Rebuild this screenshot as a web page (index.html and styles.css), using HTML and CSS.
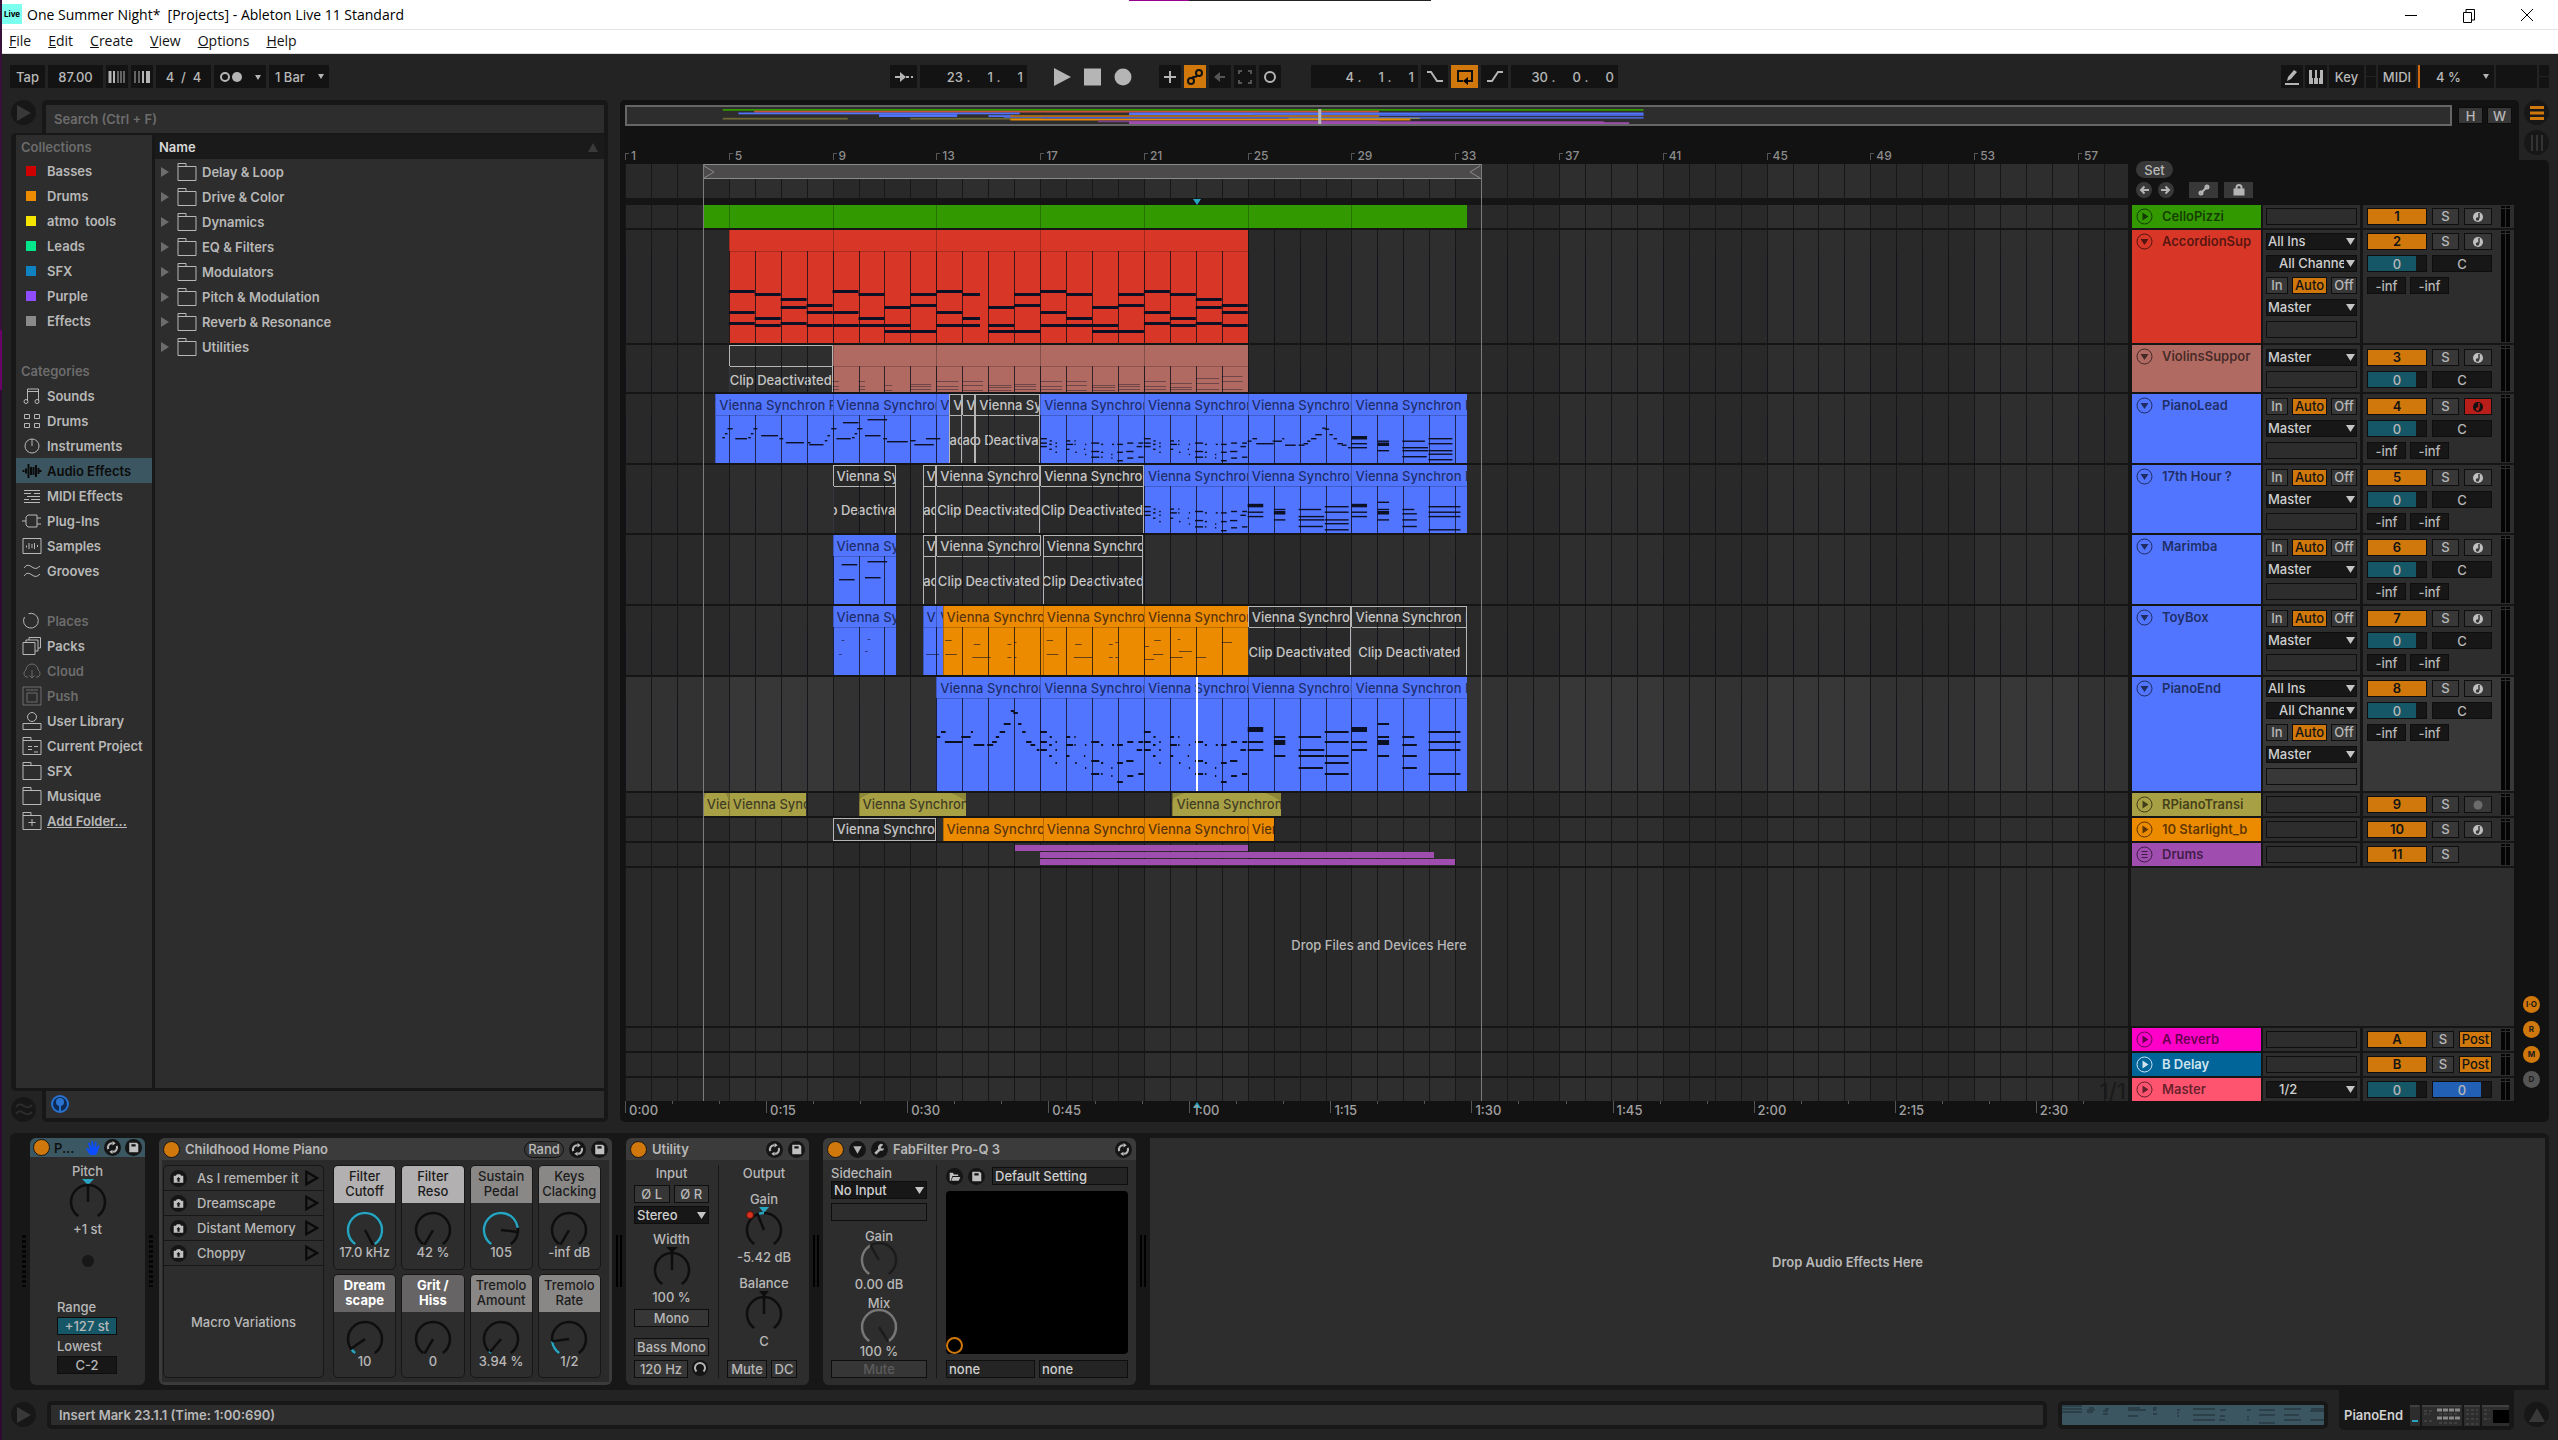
FILE: index.html
```html
<!DOCTYPE html>
<html lang="en">
<head>
<meta charset="utf-8">
<title>One Summer Night* [Projects] - Ableton Live 11 Standard</title>
<link rel="stylesheet" href="styles.css">
</head>
<body>
<svg class="sprite" aria-hidden="true">
  <symbol id="i-folder" viewBox="0 0 20 20"><path d="M1 18.500V1.500h8v3h10v14zM1 4.500h8"/></symbol>
  <symbol id="i-sounds" viewBox="0 0 20 20"><path d="M5.500 15V3h11v12M5.500 5.500h11"/><circle cx="4" cy="15.500" r="2"/><circle cx="15" cy="15.500" r="2"/></symbol>
  <symbol id="i-drums" viewBox="0 0 20 20"><path d="M2.500 3.500h5v4h-5zM12.500 3.500h5v4h-5zM2.500 12.500h5v4h-5zM12.500 12.500h5v4h-5z"/></symbol>
  <symbol id="i-inst" viewBox="0 0 20 20"><circle cx="10" cy="10" r="7"/><path d="M10 3v7"/></symbol>
  <symbol id="i-wave" viewBox="0 0 20 20"><path d="M1.500 9v2M4 7.500v5M6.500 3v14M9 6v8M11.500 6v8M14 4v12M16.500 7v6M18.500 9v2"/></symbol>
  <symbol id="i-midi" viewBox="0 0 20 20"><path d="M2 4.500h16M2 7.500h7M12 7.500h6M5 10.500h13M2 13.500h5M9 13.500h9M2 16.500h16"/></symbol>
  <symbol id="i-plug" viewBox="0 0 20 20"><path d="M0 10h4M6 4h9v12H6l-2-2V6zM15 7h4M15 13h4"/></symbol>
  <symbol id="i-sample" viewBox="0 0 20 20"><path d="M1 2.500h18v15H1zM4.500 9.500v2M7 7v6M10 8v4M12.500 7v6M15.500 9v2"/></symbol>
  <symbol id="i-groove" viewBox="0 0 20 20"><path d="M2 7c3-4 5-3 8-1s5 2 8-1M2 15c3-4 5-3 8-1s5 2 8-1"/></symbol>
  <symbol id="i-places" viewBox="0 0 20 20"><path d="M5 2.500A7.500 7.500 0 1 0 14.500 5.500A7 7 0 0 0 6 2.500M1.500 4.500A9 9 0 0 0 2 13" stroke="none"/><path d="M6.500 2.700A7.400 7.400 0 1 1 2.500 6"/></symbol>
  <symbol id="i-packs" viewBox="0 0 20 20"><path d="M1 6.500h12v12H1zM4 6V4h12v11h-3M7 4V1.500h11.500V12H16"/></symbol>
  <symbol id="i-cloud" viewBox="0 0 20 20"><path d="M6 16H4a4 4 0 0 1 0-7 6 6 0 0 1 12 0 4 4 0 0 1 0 7h-2M10 9v8M7.500 14.500 10 17l2.500-2.500"/></symbol>
  <symbol id="i-push" viewBox="0 0 20 20"><path d="M1 1h18v18H1zM4 4h12M5 7h10v9H5z"/></symbol>
  <symbol id="i-user" viewBox="0 0 20 20"><circle cx="10" cy="6" r="4.500"/><path d="M1 18.500v-6h18v6z"/></symbol>
  <symbol id="i-project" viewBox="0 0 20 20"><path d="M1 18.500V1.500h8v3h10v14zM1 4.500h8M6 10.500h4M6 13.500h4M12 10.500h4M12 16h4"/></symbol>
  <symbol id="i-add" viewBox="0 0 20 20"><path d="M1 18.500V1.500h8v3h10v14zM1 4.500h8M10 8v7M6.500 11.500h7"/></symbol>
  <symbol id="i-sync" viewBox="0 0 16 16"><circle cx="8" cy="8" r="8" class="disc"/><path d="M4 9.500A4 4 0 0 1 8 4M12 6.500A4 4 0 0 1 8 12" class="ln"/><path d="M8 1.800 11 4 8 6zM8 10l-3 2 3 2.200z" class="fl"/></symbol>
  <symbol id="i-save" viewBox="0 0 16 16"><circle cx="8" cy="8" r="8" class="disc"/><path d="M4 3.500h7l1.500 1.500v7.500H4zM6 5v2h4V5z" class="fl" fill-rule="evenodd"/></symbol>
  <symbol id="i-cam" viewBox="0 0 16 16"><circle cx="8" cy="8" r="8" class="disc"/><path d="M3.500 5.500h2L6.500 4h3l1 1.500h2v6.500h-9zM8 6.500 10 8.700H9V11H7V8.700H6z" class="fl" fill-rule="evenodd"/></symbol>
  <symbol id="i-tri" viewBox="0 0 12 14"><path d="M1 1.500 10.500 7 1 12.500z" class="tri"/></symbol>
  <symbol id="arc" viewBox="-20 -20 40 40" overflow="visible"><path d="M-9.700 14A17 17 0 1 1 9.700 14"/></symbol>
</svg>

<div class="app">
  <header class="titlebar">
    <span class="logo">Live</span>
    <h1>One Summer Night*&nbsp; [Projects] - Ableton Live 11 Standard</h1>
    <span class="topline" aria-hidden="true"></span>
    <div class="winctl">
      <button aria-label="Minimize"><svg viewBox="0 0 14 18"><path d="M1 9.500h12"/></svg></button>
      <button aria-label="Restore"><svg viewBox="0 0 14 18"><path d="M1.500 6.500h8v10h-8zM4 6V3.500h8.500V14H10"/></svg></button>
      <button aria-label="Close"><svg viewBox="0 0 14 18"><path d="M1 3l12 12M13 3 1 15"/></svg></button>
    </div>
  </header>
  <nav class="menubar">
    <a href="#"><u>F</u>ile</a><a href="#"><u>E</u>dit</a><a href="#"><u>C</u>reate</a><a href="#"><u>V</u>iew</a><a href="#"><u>O</u>ptions</a><a href="#"><u>H</u>elp</a>
  </nav>

  <section class="transport">
    <div class="tgroup">
      <button class="t w35">Tap</button>
      <input class="t w54" aria-label="Tempo" value="87.00">
      <button class="t w22" aria-label="Nudge down"><svg width="18" height="14" class="bars"><path d="M2 1v12" stroke-width="3"/><path d="M6 1v12" stroke-width="2"/><path d="M10 1v12M13 1v12M16 1v12"/></svg></button>
      <button class="t w22" aria-label="Nudge up"><svg width="18" height="14" class="bars"><path d="M2 1v12M6 1v12"/><path d="M10 1v12" stroke-width="2"/><path d="M15 1v12" stroke-width="4"/></svg></button>
      <input class="t w54" aria-label="Time signature" value="4  /  4">
      <button class="t w52" aria-label="Metronome"><svg width="46" height="14"><circle cx="8" cy="7" r="4" class="ring"/><circle cx="20" cy="7" r="5" fill="#b5b5b5"/><path d="M38 5h6l-3 5z" fill="#b5b5b5"/></svg></button>
      <select class="t w59 mini" aria-label="Quantization"><option>1 Bar</option></select>
    </div>
    <div class="tgroup">
      <button class="t w27" aria-label="Follow"><svg width="20" height="12"><path d="M1 6h6M12 6h3M17 6h2" class="ring"/><path d="M6 1l6 5-6 5z" fill="#b5b5b5"/></svg></button>
      <input class="t w107 pos" aria-label="Arrangement position" value="23 .     1 .     1">
      <span class="sp s20"></span>
      <button class="tp" aria-label="Play"><svg width="18" height="20"><path d="M0 1l17 9-17 9z"/></svg></button>
      <button class="tp" aria-label="Stop"><svg width="18" height="20"><path d="M0 1.500h17v17H0z"/></svg></button>
      <button class="tp" aria-label="Record"><svg width="18" height="20"><circle cx="9" cy="10" r="8.500"/></svg></button>
      <span class="sp s20"></span>
      <button class="t w22" aria-label="Overdub"><svg width="14" height="14"><path d="M7 1v12M1 7h12" class="ring"/></svg></button>
      <button class="t w22 on" aria-label="Automation arm"><svg width="16" height="16"><circle cx="4" cy="12" r="3" class="dk"/><circle cx="12" cy="4" r="3" class="dk"/><path d="M5 9.500C6 6 8 10 10 6.500" class="dk"/></svg></button>
      <button class="t w22" aria-label="Re-enable automation"><svg width="14" height="12"><path d="M4 6h8" stroke="#555" stroke-width="2"/><path d="M7 1v10L1 6z" fill="#555"/></svg></button>
      <button class="t w22" aria-label="Capture"><svg width="14" height="14"><path d="M1 4V1h3M10 1h3v3M13 10v3h-3M4 13H1v-3" fill="none" stroke="#555" stroke-width="2"/></svg></button>
      <button class="t w22" aria-label="Session record"><svg width="14" height="14"><circle cx="7" cy="7" r="5" class="ring"/></svg></button>
      <span class="sp"></span>
      <input class="t w107 pos" aria-label="Loop start" value="4 .     1 .     1">
      <button class="t w27" aria-label="Punch in"><svg width="18" height="12"><path d="M1 1h4l6 9h6" class="ring"/></svg></button>
      <button class="t w27 on" aria-label="Loop"><svg width="18" height="16"><path d="M7 12H2V2h14v10h-5" class="dk"/><path d="M12 8v8l-5-4z"/></svg></button>
      <button class="t w27" aria-label="Punch out"><svg width="18" height="12"><path d="M1 10h5l6-9h5" class="ring"/></svg></button>
      <input class="t w107 pos" aria-label="Loop length" value="30 .     0 .     0">
    </div>
    <div class="tgroup end">
      <button class="t w22" aria-label="Draw mode"><svg width="16" height="16"><path d="M1 15h14" class="ring"/><path d="M3 12l1-4 6-7 3 2-6 7z" fill="#b5b5b5"/></svg></button>
      <button class="t w22" aria-label="Computer MIDI keyboard"><svg width="16" height="16"><path d="M1 1h14v14H1z" fill="#b5b5b5"/><path d="M5.500 1v14M10.500 1v14" stroke="#151515"/><path d="M5.500 1v8M10.500 1v8" stroke="#151515" stroke-width="3"/></svg></button>
      <button class="t w35">Key</button>
      <span class="t w10 split"></span>
      <button class="t w38">MIDI</button>
      <select class="t w75 mini cpu" aria-label="CPU load"><option>4 %</option></select>
      <span class="t w41"></span>
      <span class="t w10 split"></span>
    </div>
  </section>

  <main class="main">
    <aside class="browser">
      <div class="btop">
        <button class="disc-btn" aria-label="Preview"><svg width="14" height="16"><path d="M0 0l14 8-14 8z"/></svg></button>
        <div class="search-shell"><input type="search" placeholder="Search (Ctrl + F)" aria-label="Search"></div>
      </div>
      <div class="bbody">
        <ul class="side">
          <li class="head">Collections</li>
          <li><i class="sw" style="background:#cf0000"></i>Basses</li>
          <li><i class="sw" style="background:#ed8b00"></i>Drums</li>
          <li><i class="sw" style="background:#f5e500"></i>atmo&nbsp; tools</li>
          <li><i class="sw" style="background:#00e68a"></i>Leads</li>
          <li><i class="sw" style="background:#0f83c2"></i>SFX</li>
          <li><i class="sw" style="background:#8f4dff"></i>Purple</li>
          <li><i class="sw" style="background:#8a8a8a"></i>Effects</li>
          <li></li>
          <li class="head">Categories</li>
          <li><svg><use href="#i-sounds"/></svg>Sounds</li>
          <li><svg><use href="#i-drums"/></svg>Drums</li>
          <li><svg><use href="#i-inst"/></svg>Instruments</li>
          <li class="sel"><svg><use href="#i-wave"/></svg>Audio Effects</li>
          <li><svg><use href="#i-midi"/></svg>MIDI Effects</li>
          <li><svg><use href="#i-plug"/></svg>Plug-Ins</li>
          <li><svg><use href="#i-sample"/></svg>Samples</li>
          <li><svg><use href="#i-groove"/></svg>Grooves</li>
          <li></li>
          <li class="places"><svg><use href="#i-places"/></svg>Places</li>
          <li><svg><use href="#i-packs"/></svg>Packs</li>
          <li class="dim"><svg><use href="#i-cloud"/></svg>Cloud</li>
          <li class="dim"><svg><use href="#i-push"/></svg>Push</li>
          <li><svg><use href="#i-user"/></svg>User Library</li>
          <li><svg><use href="#i-project"/></svg>Current Project</li>
          <li><svg><use href="#i-folder"/></svg>SFX</li>
          <li><svg><use href="#i-folder"/></svg>Musique</li>
          <li><svg><use href="#i-add"/></svg><a href="#">Add Folder...</a></li>
        </ul>
        <div class="files">
          <div class="fhead">Name<span class="sort"></span></div>
          <ul>
            <li><svg><use href="#i-folder"/></svg>Delay &amp; Loop</li>
            <li><svg><use href="#i-folder"/></svg>Drive &amp; Color</li>
            <li><svg><use href="#i-folder"/></svg>Dynamics</li>
            <li><svg><use href="#i-folder"/></svg>EQ &amp; Filters</li>
            <li><svg><use href="#i-folder"/></svg>Modulators</li>
            <li><svg><use href="#i-folder"/></svg>Pitch &amp; Modulation</li>
            <li><svg><use href="#i-folder"/></svg>Reverb &amp; Resonance</li>
            <li><svg><use href="#i-folder"/></svg>Utilities</li>
          </ul>
        </div>
      </div>
      <div class="bfoot">
        <button class="disc-btn" aria-label="Groove pool"><svg width="18" height="16"><path d="M1 5c3-4 5-3 8-1s5 2 8-1M1 12c3-4 5-3 8-1s5 2 8-1" class="wv"/></svg></button>
        <div class="foot-shell"><div class="foot"><svg width="20" height="20"><circle cx="10" cy="10" r="8" fill="#0b2a55" stroke="#2a72d0" stroke-width="2"/><circle cx="10" cy="8" r="4" fill="#2a72d0"/><path d="M10 8v9" stroke="#2a72d0" stroke-width="2"/></svg></div></div>
      </div>
    </aside>

    <section class="arr">
      <div class="strip-row">
        <div class="strip">
          <div class="ovrow">
            <div class="overview"><svg id="overview" viewBox="0 0 582 17" preserveAspectRatio="none"></svg></div>
            <button class="hw">H</button><button class="hw">W</button>
          </div>
          <div class="ruler" id="ruler"></div>
        </div>
        <div class="views">
          <button class="disc-btn" aria-label="Arrangement view"><svg width="14" height="16"><path d="M0 2.500h14M0 8h14M0 13.500h14" stroke="#d0780c" stroke-width="3"/></svg></button>
          <button class="disc-btn" aria-label="Session view"><svg width="14" height="16"><path d="M2 0v16M7 0v16M12 0v16" stroke="#333" stroke-width="2"/></svg></button>
        </div>
      </div>
      <div class="arr-body">
        <div class="rows">
          <div class="looprow">
            <div class="lane grid-all"><div class="loop" id="loop"><svg width="14" height="14"><path d="M1 1l10 6-10 6"/></svg><svg width="14" height="14"><path d="M13 1L3 7l10 6"/></svg></div></div>
            <div class="locators">
              <button class="pill">Set</button>
              <div class="locrow">
                <button class="rnd" aria-label="Previous locator"><svg width="10" height="10"><path d="M2 5h8M5.500 1.500 2 5l3.500 3.500"/></svg></button>
                <button class="rnd" aria-label="Next locator"><svg width="10" height="10"><path d="M0 5h8M4.500 1.500 8 5 4.500 8.500"/></svg></button>
                <button class="sq" aria-label="Automation mode"><svg width="12" height="12"><path d="M3 9l6-6" /><circle cx="3" cy="9" r="1.500"/><circle cx="9" cy="3" r="1.500"/></svg></button>
                <button class="sq" aria-label="Lock envelopes"><svg width="12" height="12"><path d="M1.500 5.500h9v5h-9z" fill="#b5b5b5"/><path d="M3.500 5V3.500a2.500 2.500 0 0 1 5 0V5"/></svg></button>
              </div>
            </div>
          </div>
          <div class="band"></div>
          <div id="tracks" class="tracks"></div>
          <div class="marks" id="marks" aria-hidden="true"></div>
        </div>
        <div class="timeruler" id="timeruler"></div>
        <div class="sections">
          <button>I·O</button><button>R</button><button>M</button><button class="off">D</button>
        </div>
      </div>
    </section>
  </main>

  <section class="devices">
    <span class="dots"></span>
    <article class="dev pitch">
      <header class="teal"><button class="led" aria-label="Pitch on"></button><h2>P...</h2>
        <svg class="hand" width="14" height="16"><path d="M4 15 0 9l1-1 3 2-2-7 1.500-.5L5.500 8 5.200 1h1.600L8 8l1.200-6.500 1.500.3L10 8.500 12.300 5l1.400.8L11.500 12l-1.500 3z" fill="#0b4dff"/></svg>
        <svg class="ic"><use href="#i-sync"/></svg><svg class="ic"><use href="#i-save"/></svg></header>
      <div class="dbody col">
        <span class="lb">Pitch</span>
        <svg class="knob tall" viewBox="-20 -23 40 42"><path d="M-6-23H6L0-17z" fill="#27a4bf"/><use href="#arc" x="-20" y="-20" width="40" height="40"/><path d="M0 0V-17"/></svg>
        <span class="lb">+1 st</span>
        <span class="hole"></span>
        <label class="lb left" for="rng">Range</label><input id="rng" class="box tealbox" value="+127 st">
        <label class="lb left" for="low">Lowest</label><input id="low" class="box" value="C-2">
      </div>
    </article>
    <span class="dots"></span>
    <article class="dev rack">
      <header><button class="led" aria-label="Rack on"></button><h2>Childhood Home Piano</h2><button class="rand">Rand</button><svg class="ic"><use href="#i-sync"/></svg><svg class="ic"><use href="#i-save"/></svg></header>
      <div class="rbody">
        <div class="vars">
          <ul>
            <li><svg class="ic"><use href="#i-cam"/></svg><span>As I remember it</span><svg class="tr"><use href="#i-tri"/></svg></li>
            <li><svg class="ic"><use href="#i-cam"/></svg><span>Dreamscape</span><svg class="tr"><use href="#i-tri"/></svg></li>
            <li><svg class="ic"><use href="#i-cam"/></svg><span>Distant Memory</span><svg class="tr"><use href="#i-tri"/></svg></li>
            <li><svg class="ic"><use href="#i-cam"/></svg><span>Choppy</span><svg class="tr"><use href="#i-tri"/></svg></li>
          </ul>
          <p>Macro Variations</p>
        </div>
        <div class="macros" id="macros"></div>
      </div>
    </article>
    <span class="lvl"></span>
    <article class="dev util">
      <header><button class="led" aria-label="Utility on"></button><h2>Utility</h2><svg class="ic"><use href="#i-sync"/></svg><svg class="ic"><use href="#i-save"/></svg></header>
      <div class="dbody two">
        <div class="ucol">
          <span class="lb">Input</span>
          <div class="r g4"><button class="b">Ø L</button><button class="b">Ø R</button></div>
          <select class="b dd g3" aria-label="Channel mode"><option>Stereo</option></select>
          <span class="lb g7">Width</span>
          <svg class="knob tall" viewBox="-20 -23 40 42"><path d="M-6-23H6L0-17z" class="bk"/><use href="#arc" x="-20" y="-20" width="40" height="40"/><path d="M0 0V-17"/></svg>
          <span class="lb">100 %</span>
          <button class="b g4">Mono</button>
          <button class="b g11">Bass Mono</button>
          <div class="r g4"><input class="b hz" aria-label="Bass mono frequency" value="120 Hz"><svg class="ic"><circle cx="8" cy="8" r="8" class="disc"/><path d="M4.500 11.500A5 5 0 1 1 11.500 11.500" fill="none" stroke="#b5b5b5" stroke-width="2"/></svg></div>
        </div>
        <div class="ucol right">
          <span class="lb">Output</span>
          <span class="lb g10">Gain</span>
          <svg class="knob tall" viewBox="-20 -23 40 42"><path d="M-5-23H5L0-17z" fill="#27a4bf"/><use href="#arc" x="-20" y="-20" width="40" height="40"/><path d="M-5-16.300A17 17 0 0 1 0-17" stroke="#27a4bf"/><path d="M0 0V-17" transform="rotate(-22)"/><circle cx="-14" cy="-15" r="3.500" fill="#d8321e" stroke="#5a1008" stroke-width="1"/></svg>
          <span class="lb">-5.42 dB</span>
          <span class="lb g10">Balance</span>
          <svg class="knob tall" viewBox="-20 -23 40 42"><path d="M-5-23H5L0-17z" class="bk"/><use href="#arc" x="-20" y="-20" width="40" height="40"/><path d="M0 0V-17"/></svg>
          <span class="lb">C</span>
          <div class="r bottom"><button class="b mute">Mute</button><button class="b dc">DC</button></div>
        </div>
      </div>
    </article>
    <span class="lvl"></span>
    <article class="dev fab">
      <header><button class="led" aria-label="FabFilter on"></button>
        <svg class="ic" viewBox="0 0 16 16"><circle cx="8" cy="8" r="8" class="disc"/><path d="M4 5h8l-4 7z" fill="#b5b5b5"/></svg>
        <svg class="ic" viewBox="0 0 16 16"><circle cx="8" cy="8" r="8" class="disc"/><path d="M4 12l4.500-4.500" stroke="#b5b5b5" stroke-width="2.500"/><path d="M11.500 3.500A3 3 0 1 0 12.500 7L10 7 9 6z" fill="#b5b5b5"/></svg>
        <h2>FabFilter Pro-Q 3</h2><svg class="ic"><use href="#i-sync"/></svg></header>
      <div class="dbody two">
        <div class="fcol">
          <label class="lb left" for="sc">Sidechain</label>
          <select id="sc" class="b dd"><option>No Input</option></select>
          <span class="b hollow g4"></span>
          <span class="lb g7">Gain</span>
          <svg class="knob low" viewBox="-20 -18 40 34"><use href="#arc" x="-20" y="-20" width="40" height="40" stroke="#1c1c1c"/><use href="#arc" x="-20" y="-20" width="40" height="40" stroke="#777" stroke-dasharray="34 200"/><path d="M0 0V-17" stroke="#1c1c1c" transform="rotate(-30)"/></svg>
          <span class="lb">0.00 dB</span>
          <span class="lb g3">Mix</span>
          <svg class="knob low" viewBox="-20 -18 40 34"><use href="#arc" x="-20" y="-20" width="40" height="40" stroke="#777"/><path d="M0 0V-17" stroke="#1c1c1c" transform="rotate(148)"/></svg>
          <span class="lb">100 %</span>
          <button class="b faint bottom">Mute</button>
        </div>
        <div class="xycol">
          <div class="preset"><svg class="ic" viewBox="0 0 16 16"><circle cx="8" cy="8" r="8" class="disc"/><path d="M3.500 12V4.500h3l1 1.500h4v1.500H6L4.500 12zM6.500 8.500h7L12 12H5z" class="fl"/></svg><svg class="ic"><use href="#i-save"/></svg><input class="b txt" aria-label="Preset" value="Default Setting"></div>
          <div class="xy"><span></span></div>
          <div class="r nones"><input class="b txt" aria-label="X parameter" value="none"><input class="b txt" aria-label="Y parameter" value="none"></div>
        </div>
      </div>
    </article>
    <span class="lvl"></span>
    <div class="dropfx">Drop Audio Effects Here</div>
  </section>

  <footer class="status">
    <button class="disc-btn" aria-label="Help view"><svg width="14" height="16"><path d="M0 0l14 8-14 8z"/></svg></button>
    <p class="msg">Insert Mark 23.1.1 (Time: 1:00:690)</p>
    <div class="clipview"><svg viewBox="0 0 262 20" preserveAspectRatio="none"><path d="M0 1h20M0 4h20M0 7h20M27 3h5M25 5h8M25 7h6M43 4h4M41 6h5M41 9h5M66 3h12M66 5h18M66 11h10M91 3h4M91 5h3M91 9h4M115 5h3M115 8h2M115 11h2M131 4h22M131 10h22M131 15h22M158 5h6M158 11h5M157 15h6M185 5h4M185 12h2M185 15h2M197 5h16M197 10h16M197 18h16M222 4h17M222 10h15M222 15h17M249 4h13M248 6h14M248 15h14"/></svg></div>
    <div class="devtab"><span>PianoEnd</span>
      <svg width="99" height="21"><path d="M0 0h10v21H0zM12 0h40v21H12zM54 0h16v21H54zM72 0h27v21H72z" fill="#2d2d2d"/><path d="M0 1h9M12 1h39M54 1h16M72 1h27" stroke="#555"/><path d="M27 5h24M27 13h24" stroke="#888" stroke-width="3" stroke-dasharray="5 1"/><path d="M14 6h8M14 9h6M14 16h10M56 5h12M56 9h12M56 14h12M56 19h12M74 5h6M74 9h5M74 14h6M29 9h20M29 18h20" stroke="#555" stroke-dasharray="3 2"/><path d="M2 16h6" stroke="#27a4bf" stroke-width="2"/><path d="M83 5h16v13H83z"/></svg>
    </div>
    <button class="disc-btn last" aria-label="Toggle detail view"><svg width="16" height="14"><path d="M8 0l8 14H0z"/></svg></button>
  </footer>
</div>
<script src="app.js"></script>
</body>
</html>
```

FILE: styles.css
```css
* { box-sizing: border-box; }
body {
  margin: 0;
  background: linear-gradient(#38103a 0 330px, #6a006a 330px 390px, #2e0a30 390px);
  color: #b8b8b8;
  font: 500 13px/16px Inter, "Liberation Sans", sans-serif;
}
button, input, select { font: inherit; color: inherit; border: 0; padding: 0; margin: 0; border-radius: 0; background: none; }
button { display: flex; align-items: center; justify-content: center; white-space: nowrap; }
input { min-width: 0; }
select { appearance: none; }
ul, h1, h2, p { margin: 0; padding: 0; font: inherit; list-style: none; }
a { color: inherit; }
.sprite { position: absolute; width: 0; height: 0; }
.app { margin-left: 2px; min-height: 100vh; display: flex; flex-direction: column; background: #232323; }

/* window chrome */
.titlebar { position: relative; height: 30px; display: flex; align-items: center; background: #fff; color: #000; border-bottom: 1px solid #e3e3e3; font: 400 14px/20px "Open Sans", "Noto Sans", sans-serif; }
.titlebar h1 { margin-left: 5px; flex: 1; }
.logo { width: 20px; height: 20px; background: #7dfff0; font: 700 8px/20px Inter, sans-serif; text-align: center; margin-bottom: 2px; }
.topline { position: absolute; top: 0; left: 44.1%; width: 11.8%; height: 1px; background: linear-gradient(90deg, #9a0090 20%, #222 20%); }
.winctl { display: flex; gap: 44px; padding-right: 24px; }
.winctl svg { width: 14px; height: 18px; fill: none; stroke: #000; }
.menubar { height: 24px; display: flex; gap: 17px; padding-left: 7px; background: #fff; color: #111; border-bottom: 1px solid #ddd; font: 400 14px/22px "Open Sans", "Noto Sans", sans-serif; }
.menubar a { text-decoration: none; }

/* transport */
.transport { display: grid; grid-template-columns: 880fr auto 931fr; padding: 11px 9px 12px 8px; }
.tgroup { display: flex; gap: 3px; }
.tgroup.end { justify-content: flex-end; gap: 2px; }
.t { height: 23px; background: #131313; text-align: center; flex: none; }
.t svg { display: block; overflow: visible; }
.w10 { width: 10px; } .w22 { width: 22px; } .w27 { width: 27px; } .w35 { width: 35px; } .w38 { width: 38px; } .w41 { width: 41px; }
.w52 { width: 52px; } .w54 { width: 55px; } .w59 { width: 60px; } .w75 { width: 76px; } .w107 { width: 107px; }
.t.pos { text-align: right; padding-right: 4px; white-space: pre; }
.sp { width: 24px; }
.s20 { width: 21px; }
.tp { width: 18px; height: 23px; margin-right: 9px; }
.tp:nth-of-type(4) { margin-right: 0; }
.tp svg { fill: #b5b5b5; }
.mini { text-align: left; padding-left: 6px; background: #131313 url("data:image/svg+xml,%3Csvg xmlns='http://www.w3.org/2000/svg' width='6' height='5'%3E%3Cpath d='M0 0h6L3 5z' fill='%23b5b5b5'/%3E%3C/svg%3E") no-repeat right 5px center; }
.cpu { border-left: 2px solid #d0680c; padding-left: 16px; }
.split { background: linear-gradient(#131313 11px, #232323 11px 12px, #131313 12px); }
.on { background: #d0780c; color: #111; }
.ring { fill: none; stroke: #b5b5b5; stroke-width: 2; }
.dk { fill: none; stroke: #111; stroke-width: 2; }
.bars { fill: none; stroke: #b5b5b5; stroke-width: 1; }

/* main split */
.main { flex: 1; display: grid; grid-template-columns: 597px 1fr; gap: 12px; padding: 0 0 11px 9px; }
.disc-btn { width: 25px; height: 25px; border-radius: 50%; background: #171717; flex: none; }
.disc-btn svg { fill: #383838; display: block; }
.disc-btn .wv { fill: none; stroke: #2d2d2d; stroke-width: 2; }
.browser { display: flex; flex-direction: column; font-weight: 600; }
.btop, .bfoot { display: flex; justify-content: space-between; }
.search-shell { width: 566px; height: 33px; padding: 5px 4px 0; background: #171717; border-radius: 5px 5px 0 0; }
.search-shell input { width: 100%; height: 28px; background: #2d2d2d; padding: 0 8px; }
.search-shell input::placeholder { color: #6c6c6c; }
.bbody { flex: 1; display: grid; grid-template-columns: 136px 1fr; gap: 3px; padding: 2px 4px 3px 5px; background: #171717; border-radius: 5px 0 0 5px; }
.side, .files { background: #2d2d2d; }
.side li { height: 25px; display: flex; align-items: center; gap: 5px; padding-left: 6px; white-space: nowrap; }
.side li:first-child { height: 23px; }
.side svg, .files svg { width: 20px; height: 20px; fill: none; stroke: currentColor; stroke-width: 1; flex: none; overflow: visible; }
.side .head, .side .dim { color: #6c6c6c; }
.side .head { padding-left: 5px; }
.side .places { color: #6c6c6c; }
.side .places svg { color: #b5b5b5; }
.side .sel { background: #3b5660; color: #0c0c0c; }
.side .sel svg { stroke-width: 2; }
.sw { width: 10px; height: 10px; margin: 0 6px 0 4px; }
.fhead { height: 24px; padding: 0 6px 0 4px; background: #1a1a1a; color: #d8d8d8; display: flex; align-items: center; justify-content: space-between; }
.sort { border: 5px solid transparent; border-top: 0; border-bottom: 9px solid #3a3a3a; }
.files li { height: 25px; display: flex; align-items: center; gap: 5px; padding-left: 6px; }
.files li::before { content: ""; border: 5px solid transparent; border-left: 8px solid #6c6c6c; border-right: 0; margin-right: 3px; }
.bfoot { align-items: flex-end; }
.foot-shell { width: 566px; padding: 0 4px 4px; background: #171717; border-radius: 0 0 5px 5px; }
.foot { height: 27px; background: #2d2d2d; padding: 3px 4px; }

/* arrangement */
.arr { display: flex; flex-direction: column; min-width: 0; }
.strip-row { display: flex; height: 60px; }
.strip { flex: 1; background: #121212; border-radius: 5px 5px 0 0; padding: 5px 7px 0 5px; }
.ovrow { display: flex; gap: 4px; align-items: center; }
.overview { flex: 1; height: 21px; padding: 2px; border: 2px solid #666; background: #2d2d2d; margin-right: 2px; }
.overview svg { display: block; width: 100%; height: 15px; }
.hw { width: 25px; height: 17px; background: #383838; border: 1px solid #0c0c0c; }
.ruler { position: relative; height: 16px; margin: 21px 384px 0 0; font-size: 12px; color: #8c8c8c; }
.ruler span, .ruler i { position: absolute; bottom: 0; border-left: 1px solid #555; }
.ruler span { height: 10px; padding-left: 5px; line-height: 6px; }
.ruler span::before { content: ""; position: absolute; left: 0; top: 0; width: 3px; border-top: 1px solid #555; }
.ruler i { height: 2px; }
.views { width: 39px; padding-left: 5px; display: flex; flex-direction: column; gap: 5px; background: #232323; }
.arr-body { position: relative; flex: 1; display: flex; flex-direction: column; margin-right: 9px; padding: 4px 35px 0 5px; background: #121212; border-radius: 0 5px 5px 5px; }
.rows { position: relative; flex: 1; display: flex; flex-direction: column; }
.lane {
  --bar: 1.7262%;
  --ln: repeating-linear-gradient(90deg, #171717 0 1px, transparent 1px var(--bar));
  position: relative; overflow: hidden; min-width: 0;
  background: repeating-linear-gradient(90deg, #292929 0 6.9048%, #2e2e2e 6.9048% 13.8096%);
}
.lane::before, .lane.tall::after { content: ""; position: absolute; inset: 0; background: var(--ln); }
.lane.tall::before { bottom: auto; height: 21px; }
.lane.tall::after { top: 21px; background: repeating-linear-gradient(90deg, rgba(10,10,20,.75) 0 1px, transparent 1px var(--bar)); }
.looprow, .track { display: grid; grid-template-columns: 1fr 129px 97px 151px; column-gap: 3px; }
.looprow { height: 32px; }
.loop { position: absolute; top: 0; height: 15px; background: #4d4a4b; border: 1px solid #8a8a8a; border-width: 1px 0; display: flex; justify-content: space-between; }
.loop svg { fill: none; stroke: #8a8a8a; }
.locators { grid-column: 2 / 5; margin: -3px 0 0 5px; display: flex; flex-direction: column; gap: 4px; align-items: flex-start; }
.locators svg { fill: none; stroke: #b5b5b5; stroke-width: 2; }
.pill { height: 17px; width: 37px; border-radius: 9px; background: #383838; }
.locrow { display: flex; gap: 6px; }
.rnd { width: 16px; height: 16px; border-radius: 50%; background: #383838; }
.sq { width: 29px; height: 16px; background: #383838; }
.rnd + .sq { margin-left: 9px; }
.band { height: 9px; background: #151515; margin-right: 386px; }
.tracks { flex: 1; display: flex; flex-direction: column; gap: 2px; background: #151515; }
.track.empty { flex: 1; }
.track.empty .lane p { position: absolute; right: 44%; top: 50%; margin-top: -10px; }
.track.empty .fill { grid-column: 2 / 5; background: #2d2d2d; }
.track.cur .lane { background: repeating-linear-gradient(90deg, #323232 0 6.9048%, #373737 6.9048% 13.8096%); }
.track.cur .io, .track.cur .mix { background: #383838; }
.name { position: relative; display: flex; gap: 9px; margin: 0 -1px 0 1px; padding: 3px 0 0 4px; font-weight: 600; font-size: 13px; line-height: 17px; color: rgba(0,0,0,.62); overflow: hidden; white-space: nowrap; }
.name svg { width: 17px; height: 17px; flex: none; fill: none; stroke: currentColor; }
.name .f { fill: currentColor; stroke: none; }
.name.light { color: #cfe4f0; }
.io, .mix { background: #2d2d2d; padding: 3px; display: flex; flex-direction: column; gap: 5px; overflow: hidden; }
.mid .io, .mid .mix { padding-top: 4px; }
.mix { position: relative; padding-left: 4px; }
.r { display: flex; gap: 4px; }
.c { height: 17px; border: 1px solid #0e0e0e; background: #383838; flex: none; line-height: 15px; text-align: center; }
.c.blank { background: none; }
.c.dd2 { width: 91px; text-align: left; padding-left: 1px; background: #171717 url("data:image/svg+xml,%3Csvg xmlns='http://www.w3.org/2000/svg' width='9' height='7'%3E%3Cpath d='M0 0h9L4.500 7z' fill='%23c5c5c5'/%3E%3C/svg%3E") no-repeat right 1px center; color: #cfcfcf; }
.c.ch { padding-left: 12px; padding-right: 12px; }
.c.orange { background: #d0780c; color: #141414; }
.c.red { background: #b81f1a; }
.c.num { width: 60px; margin-right: 1px; font-weight: 600; }
.c.s { width: 27px; margin-right: 1px; }
.c.s22 { width: 22px; margin-right: 1px; }
.c.arm { width: 28px; }
.c.post { width: 33px; }
.c.in { width: 22px; } .c.auto { width: 35px; } .c.off { width: 26px; }
.c.vol { width: 60px; margin-right: 1px; background: linear-gradient(90deg, #155766 83%, #171717 83%); }
.c.cue { width: 60px; background: linear-gradient(90deg, #2160b4 83%, #171717 83%); }
.c.pan { width: 60px; background: #171717; }
.c.inf { width: 39px; background: #171717; }
.meter { position: absolute; top: 1px; bottom: 1px; right: 4px; width: 9px; background: linear-gradient(90deg, #050505 4px, #2d2d2d 4px 5px, #050505 5px); }
.meter::after { content: ""; position: absolute; top: 2px; left: 0; right: 0; border-top: 1px solid #2d2d2d; }

.clip { position: absolute; top: 0; bottom: 0; overflow: hidden; white-space: nowrap; border-left: 1px solid rgba(0,0,0,.25); color: rgba(5,5,20,.66); }
.clip b { display: block; height: 22px; padding-left: 3px; font-weight: 500; line-height: 22px; border-bottom: 1px solid rgba(0,0,0,.2); }
.clip.dis { border: 1px solid #b5b5b5; border-bottom: 0; color: #c5c5c5; }
.lane:not(.tall) .clip.dis { border-bottom: 1px solid #b5b5b5; }
.clip.dis b { border-bottom: 1px solid #b5b5b5; line-height: 20px; height: 21px; }
.lane:not(.tall) .clip b { border-bottom: 0; }
.clip p { position: absolute; top: 21px; bottom: 0; left: -60px; right: -60px; display: flex; align-items: center; justify-content: center; }
.clip.sub { border-left: 0; }
.clip.fade { background-image: radial-gradient(ellipse 60% 130% at 48% 100%, #a8a044 98%, #8d8739 100%); }
.notes { position: absolute; inset: 0; width: 100%; height: 100%; }
.insert { position: absolute; top: 0; bottom: 0; z-index: 1; border-left: 2px solid #fff; }
.mark-1 { position: absolute; right: 2px; bottom: -2px; font: 500 22px/24px Inter, sans-serif; color: #1a1a1a; }
.marks { position: absolute; top: 0; bottom: 0; left: 0; right: 386px; pointer-events: none; }
.marks i { position: absolute; top: 0; bottom: 0; border-left: 1px solid #7c7c7c; }
.marks .tri { top: 35px; bottom: auto; border: 4px solid transparent; border-bottom: 0; border-top: 6px solid #27a4bf; margin-left: -3px; }
.marks .tri.up { top: auto; bottom: -7px; border-top: 0; border-bottom: 6px solid #27a4bf; }
.timeruler { position: relative; height: 21px; margin-right: 386px; }
.timeruler span, .timeruler i { position: absolute; top: 0; border-left: 1px solid #555; }
.timeruler span { height: 12px; padding-left: 3px; line-height: 18px; color: #a0a0a0; }
.timeruler i { height: 3px; }
.sections { position: absolute; right: 9px; bottom: 34px; display: flex; flex-direction: column; gap: 8px; }
.sections button { width: 17px; height: 17px; border-radius: 50%; background: #d0780c; color: #1a1a1a; font: 700 8px/17px Inter, sans-serif; }
.sections .off { background: #555; }

/* devices */
.devices { display: flex; margin: 0 9px 0 8px; padding: 5px 4px 5px 8px; height: 257px; background: #171717; border-radius: 6px 6px 0 6px; }
.dots { width: 4px; height: 52px; margin: 97px 4px; flex: none; background: repeating-linear-gradient(#050505 0 3px, transparent 3px 5px); }
.lvl { width: 6px; height: 52px; margin: 97px 4px; flex: none; background: linear-gradient(90deg, #000 2px, transparent 2px 4px, #000 4px); }
.dev { display: flex; flex-direction: column; background: #2d2d2d; border-radius: 6px; overflow: hidden; flex: none; }
.dev header { height: 22px; padding: 0 4px; display: flex; align-items: center; gap: 5px; background: #3b3b3b; }
.dev h2 { flex: 1; font-weight: 600; white-space: nowrap; }
.dev .teal { background: #3b5862; color: #111; }
.led { width: 17px; height: 17px; border-radius: 50%; background: #d0780c; border: 1px solid #151515; flex: none; }
.ic { width: 17px; height: 17px; flex: none; }
.disc { fill: #151515; }
.ln { fill: none; stroke: #b5b5b5; stroke-width: 2; }
.fl { fill: #c0c0c0; }
.lb { text-align: center; height: 16px; display: block; flex: none; white-space: nowrap; }
.left { text-align: left; }
.knob { width: 40px; fill: none; stroke: #0e0e0e; stroke-width: 2.5; align-self: center; overflow: visible; flex: none; }
.knob path[fill], .knob .bk { stroke: none; }
.knob .bk { fill: #0e0e0e; }
.tall.knob { height: 42px; }
.low.knob { height: 34px; }
.dbody { flex: 1; padding: 5px 8px 7px; }
.pitch { width: 115px; }
.pitch header { gap: 4px; padding: 0 3px; }
.col { display: flex; flex-direction: column; padding: 6px 27px 8px; }
.hole { width: 12px; height: 12px; border-radius: 50%; background: #171717; margin: 18px auto 32px; flex: none; }
.box { height: 18px; width: 60px; margin: 2px 0 3px; background: #171717; border: 1px solid #0e0e0e; text-align: center; flex: none; }
.tealbox { background: #155766; }
.rack { width: 453px; margin-left: 2px; background: #3b3b3b; }
.rbody { flex: 1; margin: 0 3px 3px; padding: 5px 8px 4px 1px; background: #2a2a2a; display: flex; gap: 9px; }
.rand { height: 17px; width: 40px; border-radius: 9px; background: #383838; border: 1px solid #121212; }
.vars { width: 161px; border: 1px solid #171717; border-radius: 5px; display: flex; flex-direction: column; background: #2d2d2d; }
.vars li { height: 25px; display: flex; align-items: center; padding: 0 4px 0 6px; border-bottom: 1px solid #171717; }
.vars li span { flex: 1; margin-left: 10px; white-space: nowrap; overflow: hidden; }
.vars .tr { width: 14px; height: 16px; fill: none; stroke: #0a0a0a; stroke-width: 2; flex: none; }
.vars p { flex: 1; display: flex; align-items: center; justify-content: center; }
.macros { flex: 1; display: grid; grid-template-columns: repeat(4, 1fr); grid-template-rows: 1fr 1fr; gap: 4px 5px; }
.macro { border: 1px solid #171717; border-radius: 5px; overflow: hidden; display: flex; flex-direction: column; background: #2d2d2d; text-align: center; }
.macro h3 { margin: 0 0 9px; height: 37px; padding-top: 3px; font: inherit; line-height: 15px; color: #1c1c1c; white-space: nowrap; }
.macro .knob { margin-bottom: -2px; }
.util { width: 183px; }
.two { display: flex; }
.ucol { width: 75px; display: flex; flex-direction: column; flex: none; }
.ucol.right { flex: 1; min-width: 0; margin-left: 9px; padding-left: 8px; border-left: 1px solid #171717; }
.ucol .b { width: 100%; }
.ucol .b.hz { width: 54px; }
.ucol .mute { width: 40px; } .ucol .dc { width: 26px; }
.g3 { margin-top: 3px; } .g4 { margin-top: 4px; } .g7 { margin-top: 7px; } .g10 { margin-top: 10px; } .g11 { margin-top: 11px; }
.bottom { margin-top: auto; }
.b { height: 18px; border: 1px solid #0e0e0e; background: #363636; text-align: center; flex: none; }
.r .b { flex-shrink: 1; }
.dd { width: 100%; text-align: left; padding-left: 2px; color: #cfcfcf; background: #171717 url("data:image/svg+xml,%3Csvg xmlns='http://www.w3.org/2000/svg' width='9' height='7'%3E%3Cpath d='M0 0h9L4.500 7z' fill='%23c5c5c5'/%3E%3C/svg%3E") no-repeat right 2px center; }
.hollow { background: none; }
.faint { color: #5c5c5c; }
.fab { width: 313px; }
.fcol { width: 96px; display: flex; flex-direction: column; flex: none; }
.fcol .knob { margin-top: -2px; }
.xycol { flex: 1; min-width: 0; display: flex; flex-direction: column; margin-left: 9px; padding-left: 9px; border-left: 1px solid #171717; }
.preset { display: flex; gap: 5px; padding-top: 2px; align-items: center; }
.preset .b { flex: 1; margin-left: 2px; }
.b.txt { text-align: left; padding-left: 2px; background: #242424; color: #cfcfcf; }
.xy { position: relative; flex: 1; margin: 6px 0; background: #000; border-radius: 4px; }
.xy span { position: absolute; left: 0; bottom: 0; width: 17px; height: 17px; border: 2px solid #d0780c; border-radius: 50%; }
.nones .b { width: 50%; }
.dropfx { flex: 1; background: #2d2d2d; display: flex; align-items: center; justify-content: center; font-weight: 600; }

/* status */
.status { height: 50px; display: flex; align-items: flex-start; padding: 0 9px; }
.status > * { margin-top: 11px; }
.status .disc-btn { margin-top: 12px; }
.msg { flex: 1; height: 28px; margin-left: 11px; padding: 0 8px; border: 4px solid #171717; border-radius: 5px; background: #2d2d2d; line-height: 20px; font-weight: 600; }
.clipview { width: 270px; height: 28px; margin-left: 11px; border: 4px solid #171717; border-radius: 5px; background: #3b5660; }
.clipview svg { display: block; width: 100%; height: 20px; fill: none; stroke: #1c2a30; }
.status .devtab { margin: 0 0 0 11px; width: 175px; height: 40px; padding: 10px 5px 0; display: flex; align-items: center; justify-content: space-between; background: #171717; border-radius: 0 0 5px 5px; color: #d0d0d0; font-weight: 600; }
.status .last { margin-left: 10px; }
```

FILE: app.js
```js
const BARS = 57.93;
const BAR_SECONDS = 240 / 87;
const pct = n => (n / BARS * 100).toFixed(3) + '%';
const at = bar => pct(bar - 1);

const BLUE = '#5175ff', ORANGE = '#ed8b00', OLIVE = '#a8a044', PURPLE = '#a04db0';
const V = 'Vienna Synchron Piano';

/* Note data: [tick, length, y, height]; 78 ticks to the bar */
const contour = [[0,12,59],[14,14,54],[26,52,64],[75,28,59],[104,6,54],[112,32,67],[153,18,67],[168,14,64],[179,10,59],[190,16,54],[203,20,46],[224,10,33],[232,13,35],[246,10,46],[258,10,54],[270,16,64],[283,14,67],[302,8,72]];
const phrase = [[0,20,54],[0,20,64],[0,20,72],[29,6,59],[27,8,67],[27,8,78],[46,5,64],[46,5,72],[46,5,85],[79,12,59],[79,20,67],[79,9,78],[103,4,59],[103,4,67],[105,5,85],[135,4,67],[132,4,78],[135,4,90],[154,24,64],[183,6,67],[154,24,83],[183,6,85],[154,24,96],[183,5,96],[216,6,67],[214,4,90],[214,4,98],[232,17,67],[232,17,85],[232,17,104],[262,18,64],[259,22,83],[262,18,98],[290,16,72],[296,14,64],[295,16,96]];
const chordsA = [[0,47,50,5],[0,47,64],[0,47,72],[79,34,59],[79,34,63,5],[79,34,78],[153,68,59],[153,77,72],[153,77,78],[153,73,90],[232,72,54],[232,72,64],[232,72,78],[232,72,85],[232,72,96]];
const chordsB = [[0,47,50,5],[0,47,64],[0,47,72],[79,34,46],[79,34,59],[79,34,63,5],[79,34,78],[153,36,59],[153,44,67],[153,44,78],[153,44,90],[232,96,54],[232,96,64],[232,96,72],[232,96,96]];
const place = (notes, bar, y0 = 54, k = 1) => notes.map(([x, w, y, h = 2]) =>
  [bar + x / 78, w / 78, y0 + (y - 54) * k, k < 1 ? h * .7 : h]);

const accordion = [[61,82,93],[64,88,95],[69,77,93],[75,82,95],[61,82,95],[64,88,95],[77,95,101],[64,75,101],[61,82,95],[64,88,95],[77,95,101],[64,75,101],[61,82,95],[64,88,95],[77,95,101],[64,75,101],[61,82,93],[64,88,95],[69,77,93],[75,82,95]]
  .flatMap((ys, i) => ys.map(y => [5 + i, i === 9 ? .68 : 1, y - 1, 3]));
const violins = [[.25,36,41,44],[.25,36,41,44],[.3,40,45],[.8,39,41,44],[.85,36,41,44],[.8,36,40,45],[.9,40,42,45],[.85,39,41,44],[.85,36,41,44],[.8,36,40,45],[.9,40,42,45],[.85,39,41,44],[.85,36,41,44],[.85,38,42,44],[.9,33,38,44],[.8,31,36,44]]
  .flatMap(([w, ...ys], i) => ys.map(y => [9 + i, w, y, 1]));
const lead = [[4.75,.1,43],[4.85,.1,39],[4.95,.2,34],[5.25,.45,44],[5.75,.1,43],[5.85,.1,39],[5.95,.15,34],[6.25,.65,41],[6.95,.15,44],[7.2,.7,48],[8.05,.1,48],[8.1,.55,50],[8.7,.1,46],[8.8,.1,41],[8.95,.2,34],[9.15,.55,44],[9.75,.1,43],[9.85,.1,39],[9.95,.2,34],[9.4,.6,28],[10.35,.75,25],[10.25,.6,41],[10.95,.15,44],[11.1,.8,47],[12,.2,46],[12.15,.75,50],[12.6,.55,44]].map(n => [...n, 1.4]);
const toyPart = s => [[s+.1,.25,34,1],[s+.1,.45,48,1],[s+1.2,.25,38,1],[s+1.15,.7,51,1],[s+2.5,.15,38,1],[s+2.5,.15,51,1],[s+2.75,.1,36,1],[s+2.75,.1,51,1]];

const PH = [17,21,25,29,33.46];
const run = (edges, color) => edges.slice(1).map((e, i) => ({ s: edges[i], e, color }));
const dis = (s, e) => ({ s, e, off: true });

const tracks = [
  { name: 'CelloPizzi', color: '#339900', h: 23, fold: 'play', num: 1, plain: true, clips: run([4,5,9,13,17,21,25,29,33.46], '#339900') },
  { name: 'AccordionSup', color: '#d83728', h: 113, num: 2, io: 'iamob', plain: true, clips: run([5,9,13,17,21,25], '#d83728'), notes: accordion },
  { name: 'ViolinsSuppor', color: '#b06a62', h: 47, num: 3, io: 'ob', plain: true, clips: [dis(5,9), ...run([9,13,17,21,25], '#b06a62')], notes: violins, soft: .4 },
  { name: 'PianoLead', color: BLUE, h: 69, num: 4, io: 'mob', armed: true, clips: [...run([4.48,9,13,13.5], BLUE), dis(13.5,14), dis(14,14.5), dis(14.5,17), ...run(PH, BLUE)],
    notes: [...lead, ...place(phrase,17,44,.44), ...place(phrase,21,44,.44), ...place(contour,25,44,.5), ...place(chordsA,29,44,.5)] },
  { name: '17th Hour ?', color: BLUE, h: 68, num: 5, io: 'mob', clips: [dis(9,11.45), dis(12.47,13), dis(13,17), dis(17,21), ...run([21,25,29,33.46], BLUE)],
    notes: [...place(phrase,21,41,.48), ...place(chordsA,25,41,.55), ...place(chordsB,29,41,.55)] },
  { name: 'Marimba', color: BLUE, h: 69, num: 6, io: 'mob', clips: [...run([9,11.45], BLUE), dis(12.47,13), dis(13,17.05), dis(17.1,20.97)],
    notes: [[9.35,.6,29,1.4],[10.35,.75,26,1.4],[9.25,.6,44,1.4],[10.25,.6,42,1.4]] },
  { name: 'ToyBox', color: BLUE, h: 69, num: 7, io: 'mob', clips: [...run([9,11.45], BLUE), ...run([12.47,13,13.24], BLUE), ...run([13.24,17.1,21,25], ORANGE), dis(25,29), dis(29,33.46)], soft: .6,
    notes: [[9.35,.1,34,1],[10.35,.1,33,1],[9.25,.1,48,1],[10.25,.1,45,1],[12.6,.5,48,1],...toyPart(13.24),...toyPart(17.15),[21.4,.25,34,1],[21,.2,40,1],[21.35,.4,48,1],[21,.4,53,1],[22.35,.5,45,1],[22,.5,51,1],[22.3,.1,33,1],[23,.4,51,1],[24,.4,36,1]] },
  { name: 'PianoEnd', color: BLUE, h: 114, num: 8, io: 'iamob', cur: true, clips: run([13, ...PH], BLUE),
    notes: [...place(contour,13), ...place(phrase,17), ...place(phrase,21), ...place(chordsA,25), ...place(chordsB,29)] },
  { name: 'RPianoTransi', color: OLIVE, h: 23, fold: 'play', num: 9, audio: true, clips: [{ s: 4, e: 5, color: OLIVE, fade: true }, { s: 5, e: 7.96, color: OLIVE }, { s: 10, e: 14.15, color: OLIVE, fade: true }, { s: 22.1, e: 26.27, color: OLIVE, fade: true }] },
  { name: '10 Starlight_b', color: ORANGE, h: 23, fold: 'play', num: 10, clips: [dis(9,12.98), ...run([13.24,17.1,21,25,26], ORANGE)] },
  { name: 'Drums', color: PURPLE, h: 23, fold: 'group', num: 11, group: true, clips: [], subs: [[16.05,25,2],[17,32.2,9],[17,33,16]] },
  { empty: true },
  { name: 'A Reverb', color: '#ff00c8', h: 23, fold: 'play', num: 'A', ret: true, clips: [] },
  { name: 'B Delay', color: '#02659a', h: 23, fold: 'play', num: 'B', ret: true, light: true, clips: [] },
  { name: 'Master', color: '#ff5470', h: 23, fold: 'play', master: true, clips: [] }
];

const foldIcon = {
  down: '<svg viewBox="0 0 17 17"><circle cx="8.500" cy="8.500" r="7.500"/><path class="f" d="M4.500 6h8l-4 6z"/></svg>',
  play: '<svg viewBox="0 0 17 17"><circle cx="8.500" cy="8.500" r="7.500"/><path class="f" d="M6.500 4.500l6 4-6 4z"/></svg>',
  group: '<svg viewBox="0 0 17 17"><circle cx="8.500" cy="8.500" r="7.500"/><path d="M5.500 5.500h6M5.500 8.500h6M5.500 11.500h6"/></svg>'
};
const select = (label, text, cls = '') => `<select class="c dd2 ${cls}" aria-label="${label}"><option>${text}</option></select>`;
const blank = '<span class="c blank"></span>';
const ioCell = {
  i: n => select(n + ' input', 'All Ins'),
  a: n => select(n + ' input channel', 'All Channels', 'ch'),
  m: () => '<div class="r"><button class="c in">In</button><button class="c auto orange">Auto</button><button class="c off">Off</button></div>',
  o: n => select(n + ' output', 'Master'),
  b: () => blank
};

function armIcon(t) {
  if (t.audio) return '<svg width="12" height="12"><circle cx="6" cy="6" r="4.500" fill="#6c6c6c"/></svg>';
  const [a, b] = t.armed ? ['#111', '#b81f1a'] : ['#c0c0c0', '#383838'];
  return `<svg width="12" height="12"><circle cx="6" cy="6" r="5" fill="${a}"/><path d="M7 2v5.500" stroke="${b}" stroke-width="1.500"/><circle cx="5.500" cy="8" r="1.700" fill="${b}"/></svg>`;
}

function mixer(t) {
  const field = (cls, label, v) => `<input class="c ${cls}" aria-label="${t.name} ${label}" value="${v}">`;
  if (t.master) return `<div class="r">${field('vol', 'volume', 0)}${field('cue', 'cue volume', 0)}</div>`;
  const n = t.io ? t.io.length : 1;
  let out = `<div class="r"><button class="c num orange">${t.num}</button>`;
  out += t.ret ? '<button class="c s22">S</button><button class="c post orange">Post</button>'
    : '<button class="c s">S</button>' + (t.group ? '' : `<button class="c arm${t.armed ? ' red' : ''}" aria-label="Arm ${t.name}">${armIcon(t)}</button>`);
  out += '</div>';
  if (n > 1) out += `<div class="r">${field('vol', 'volume', 0)}${field('pan', 'pan', 'C')}</div>`;
  if (n > 2) out += `<div class="r">${field('inf', 'send A', '-inf')}${field('inf', 'send B', '-inf')}</div>`;
  return out;
}

function clipHtml(c, t) {
  const style = `left:${at(c.s)};width:${pct(c.e - c.s)}` + (c.off ? '' : `;background-color:${c.color}`);
  return `<div class="clip${c.off ? ' dis' : ''}${c.fade ? ' fade' : ''}" style="${style}"><b>${t.plain ? '' : V}</b>${c.off && t.h > 30 ? '<p>Clip Deactivated</p>' : ''}</div>`;
}

function row(t) {
  if (t.empty) return '<div class="track empty"><div class="lane"><p class="drop">Drop Files and Devices Here</p></div><div class="fill"></div></div>';
  const notes = t.notes ? `<svg class="notes" viewBox="0 0 ${BARS} ${t.h}" preserveAspectRatio="none" fill="#0c1024" opacity="${t.soft || 1}">` +
    t.notes.map(([b, w, y, h]) => `<rect x="${(b - 1).toFixed(2)}" y="${y.toFixed(1)}" width="${w.toFixed(2)}" height="${h}"/>`).join('') + '</svg>' : '';
  const subs = (t.subs || []).map(([s, e, y]) => `<div class="clip sub" style="left:${at(s)};width:${pct(e - s)};top:${y}px;height:6px;background:${PURPLE}"></div>`).join('');
  const insert = t.cur ? `<i class="insert" style="left:${at(23)}"></i>` : '';
  const io = t.master ? select('Master output', '1/2', 'ch') : (t.io ? [...t.io].map(k => ioCell[k](t.name)).join('') : blank);
  const mid = t.io && t.io.length < 5 ? ' mid' : '';
  return `<div class="track${t.cur ? ' cur' : ''}${mid}" style="height:${t.h}px">
    <div class="lane${t.h > 30 ? ' tall' : ''}">${t.clips.map(c => clipHtml(c, t)).join('')}${subs}${notes}${insert}${t.master ? '<span class="mark-1">1/1</span>' : ''}</div>
    <div class="name${t.light ? ' light' : ''}" style="background:${t.color}">${foldIcon[t.fold || 'down']}<span>${t.name}</span></div>
    <div class="io">${io}</div>
    <div class="mix">${mixer(t)}<span class="meter"></span></div></div>`;
}
const byId = id => document.getElementById(id);
byId('tracks').innerHTML = tracks.map(row).join('');

/* rulers */
let bars = '';
for (let b = 1; b <= 57; b += 2) bars += b % 4 === 1 ? `<span style="left:${at(b)}">${b}</span>` : `<i style="left:${at(b)}"></i>`;
byId('ruler').innerHTML = bars;
let times = '';
for (let s = 0; s <= 155; s += 5) {
  const x = pct(s / BAR_SECONDS);
  times += s % 15 ? `<i style="left:${x}"></i>` : `<span style="left:${x}">${Math.floor(s / 60)}:${String(s % 60).padStart(2, '0')}</span>`;
}
byId('timeruler').innerHTML = times;

byId('loop').style.cssText = `left:${at(4)};width:${pct(30)}`;
byId('marks').innerHTML = `<i style="left:${at(4)}"></i><i style="left:${at(34)}"></i><i class="tri" style="left:${at(23)}"></i><i class="tri up" style="left:${at(23)}"></i>`;

/* overview */
const ov = [[4,33.46,0,2,'#339900'],[5,25,2,2,'#c8503c'],[4.5,13.5,4,2,BLUE],[17,33.46,4,3,BLUE],[9,11.5,6,3,BLUE],[21,33.46,6,2,'#4762d0'],[12.5,13.3,7,2,BLUE],[13.2,25,7,2,'#b87010'],[13,33.46,9,2,'#4762d0'],[4,8,10,2,'#6f6a35'],[10,14.2,10,2,'#6f6a35'],[22.1,26.3,10,1,OLIVE],[13.2,26,11,2,ORANGE],[16,25,13,2,'#7a3f85'],[17,32.2,14,3,PURPLE],[17,33,15,2,PURPLE]];
byId('overview').innerHTML = ov.map(([s, e, y, h, c]) => `<rect x="${(s - 1) * 10}" width="${(e - s) * 10}" y="${y}" height="${h}" fill="${c}"/>`).join('') +
  '<rect x="220.500" y="0" width="1" height="17" fill="#b5b5b5"/>';

/* macro knobs: label, value, header colour, text colour, pointer angle, filled arc length */
const macros = [['Filter<br>Cutoff','17.0 kHz','#b2b0b0','',152,90],['Filter<br>Reso','42 %','#b2b0b0','',-150,0],['Sustain<br>Pedal','105','#8a8886','',97,67],['Keys<br>Clacking','-inf dB','#8a8886','',-150,0],
  ['Dream<br>scape','10','#666465','#fff',-125,5],['Grit /<br>Hiss','0','#666465','#fff',-150,0],['Tremolo<br>Amount','3.94 %','#8a8886','',-140,3],['Tremolo<br>Rate','1/2','#8a8886','',-98,14]];
byId('macros').innerHTML = macros.map(([label, value, bg, fg, angle, len]) => `<div class="macro"><h3 style="background:${bg}${fg ? ';color:' + fg + ';font-weight:700' : ''}">${label}</h3>
  <svg class="knob low" viewBox="-20 -18 40 34"><path d="M-9.700 14A17 17 0 1 1 9.700 14"/>${len ? `<path d="M-9.700 14A17 17 0 1 1 9.700 14" stroke="#27a4bf" stroke-dasharray="${len} 200"/>` : ''}<path d="M0 0V-17" transform="rotate(${angle})"/></svg><span class="lb">${value}</span></div>`).join('');
```
